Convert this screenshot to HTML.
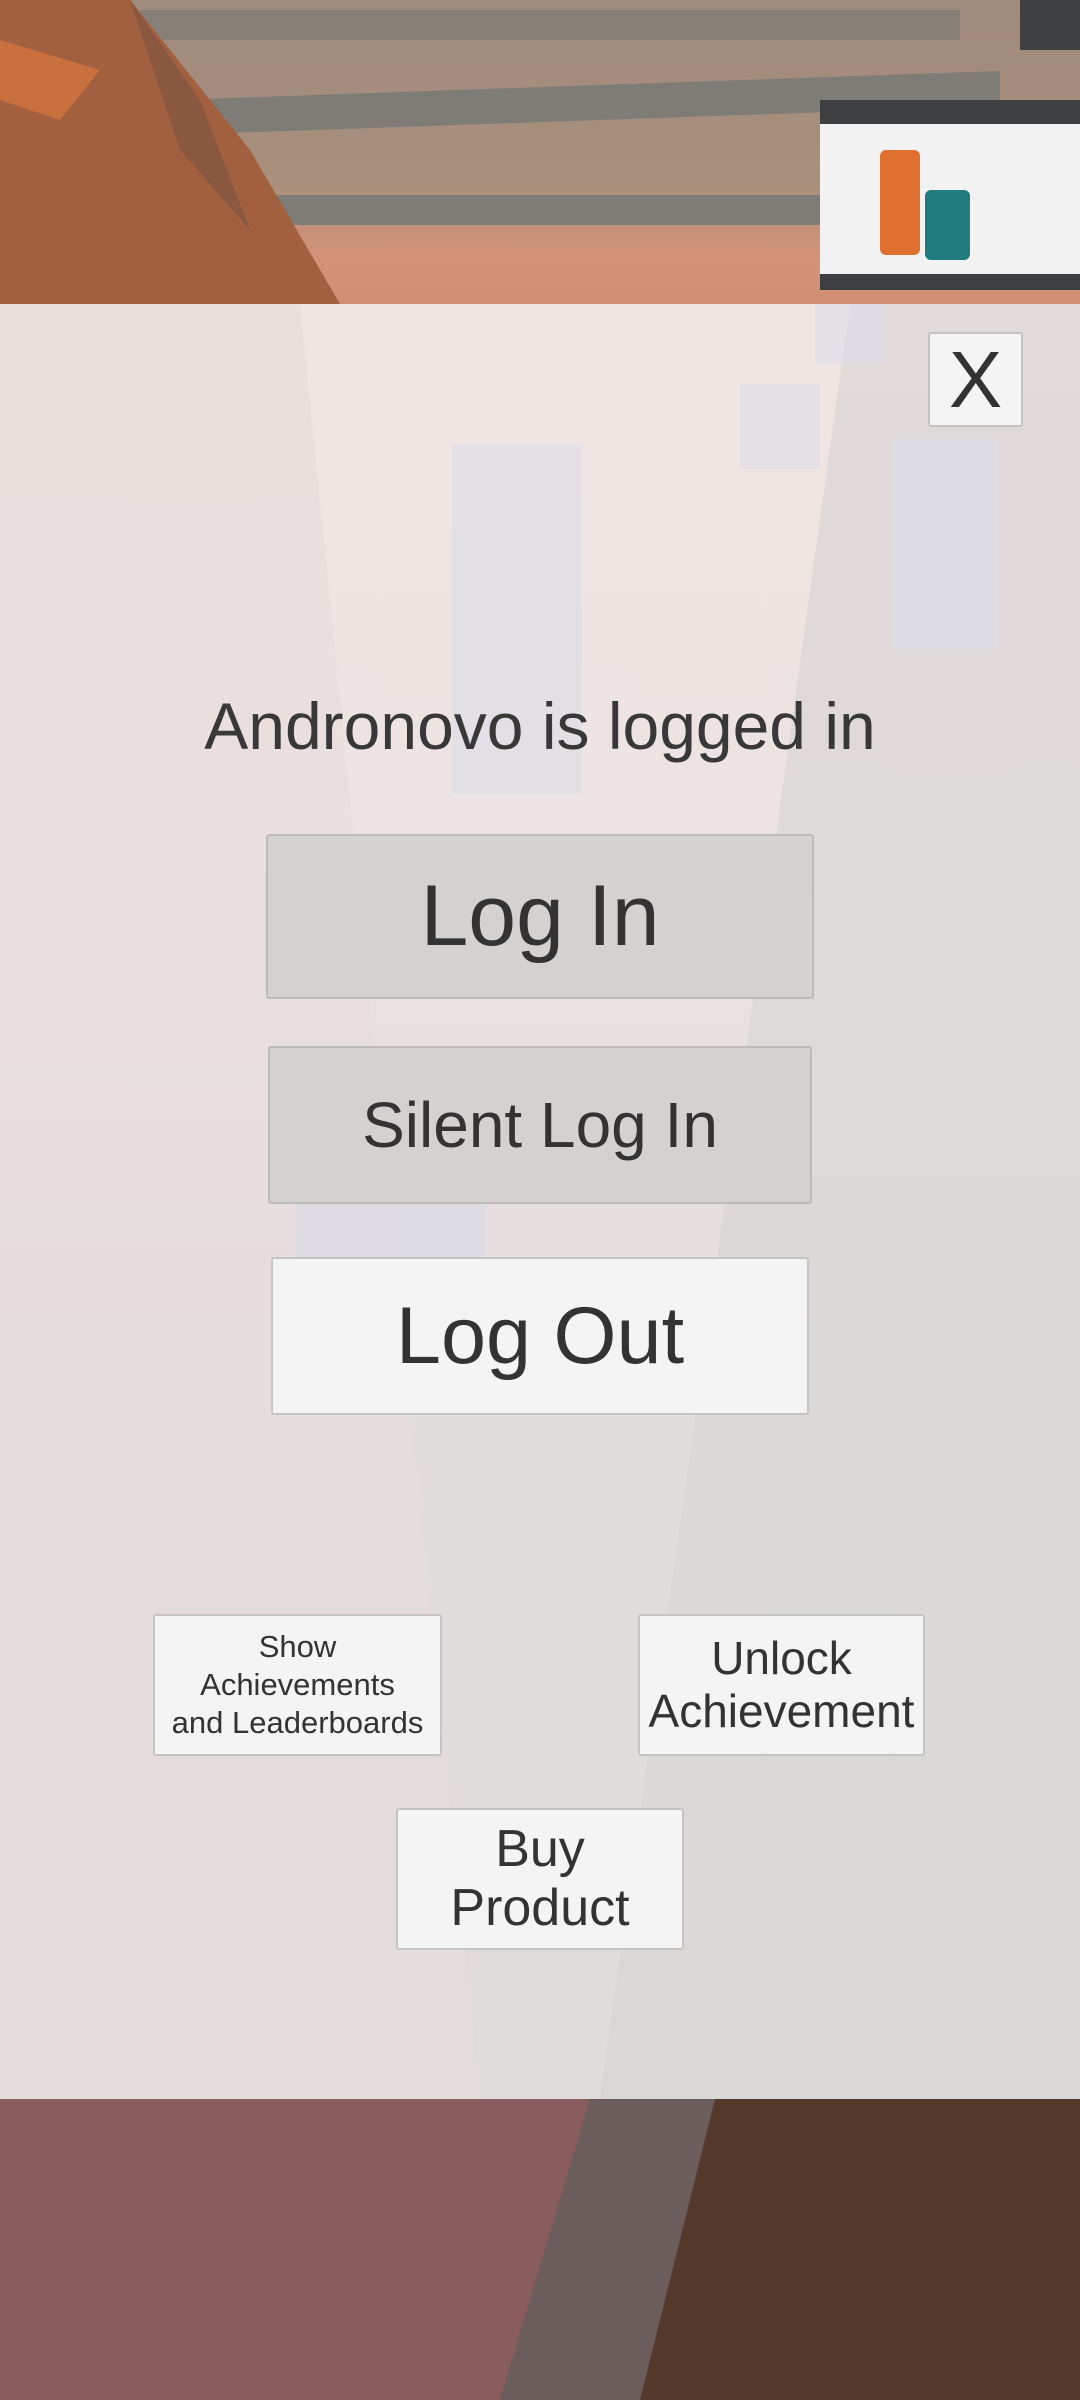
<!DOCTYPE html>
<html><head><meta charset="utf-8"><style>
html,body{margin:0;padding:0;}
body{width:1080px;height:2400px;position:relative;overflow:hidden;font-family:"Liberation Sans",sans-serif;background:#8a5c5f;}
.abs{position:absolute;}
.btn{position:absolute;box-sizing:border-box;border:2px solid #c4c4c4;border-radius:3px;display:flex;align-items:center;justify-content:center;text-align:center;color:#333;}
.light{background:#f4f4f4;}
.dark{background:#d4d1d1;border-color:#bdbaba;}
</style></head><body>
<div class="abs" style="left:0;top:0;width:1080px;height:304px;background:linear-gradient(180deg,#a08a7c 0%,#a8907c 60%,#d49277 85%,#d08e73 100%);"></div>
<div class="abs" style="left:140px;top:10px;width:820px;height:30px;background:#868078;"></div>
<div class="abs" style="left:200px;top:85px;width:800px;height:35px;background:#7f7b76;transform:skewY(-2deg);"></div>
<div class="abs" style="left:220px;top:195px;width:760px;height:30px;background:#807d79;"></div>
<svg class="abs" style="left:0;top:0" width="340" height="304"><polygon points="0,0 130,0 250,150 340,304 0,304" fill="#a2603f"/><polygon points="0,40 100,70 60,120 0,100" fill="#c9703f"/><polygon points="130,0 200,100 250,230 180,150" fill="#8a5840"/></svg>
<div class="abs" style="left:820px;top:100px;width:260px;height:190px;background:#f2f2f2;border-top:24px solid #3d3f40;border-bottom:16px solid #3d3f40;box-sizing:border-box;"></div>
<div class="abs" style="left:880px;top:150px;width:40px;height:105px;background:#e07030;border-radius:6px;"></div>
<div class="abs" style="left:925px;top:190px;width:45px;height:70px;background:#1f7b7d;border-radius:6px;"></div>
<div class="abs" style="left:1020px;top:0;width:60px;height:50px;background:#3d3f40;"></div>
<div class="abs" style="left:0;top:2099px;width:1080px;height:301px;background:#895c5e;"></div>
<svg class="abs" style="left:0;top:2099px" width="1080" height="301"><polygon points="590,0 715,0 640,301 500,301" fill="#6a5d5b"/><polygon points="715,0 1080,0 1080,301 640,301" fill="#55392a"/></svg>
<div class="abs" style="left:0;top:304px;width:1080px;height:1795px;background:linear-gradient(180deg,#f0e4e2 0%,#ece3e2 30%,#e1dcdc 60%,#dedbda 100%);"></div>
<svg class="abs" style="left:0;top:304px" width="1080" height="1795"><polygon points="0,0 300,0 480,1795 0,1795" fill="#e8dcdc" opacity="0.6"/><polygon points="850,0 1080,0 1080,1795 600,1795" fill="#d9d6d6" opacity="0.7"/>
<rect x="452" y="140" width="130" height="350" fill="#dcdde8" opacity="0.6"/><rect x="892" y="135" width="105" height="210" fill="#dcdde8" opacity="0.6"/><rect x="740" y="80" width="80" height="85" fill="#dcdde8" opacity="0.6"/><rect x="815" y="0" width="70" height="60" fill="#dcdde8" opacity="0.6"/><rect x="295" y="765" width="190" height="190" fill="#d6d8e6" opacity="0.5"/></svg>
<div class="btn light" style="left:928px;top:332px;width:95px;height:95px;font-size:80px;">X</div>
<div class="abs" style="left:0;top:688px;width:1080px;text-align:center;font-size:66px;color:#383838;">Andronovo is logged in</div>
<div class="btn dark" style="left:266px;top:834px;width:548px;height:165px;font-size:86px;">Log In</div>
<div class="btn dark" style="left:268px;top:1046px;width:544px;height:158px;font-size:64px;">Silent Log In</div>
<div class="btn light" style="left:271px;top:1257px;width:538px;height:158px;font-size:81px;">Log Out</div>
<div class="btn light" style="left:153px;top:1614px;width:289px;height:142px;font-size:31px;line-height:38px;">Show<br>Achievements<br>and Leaderboards</div>
<div class="btn light" style="left:638px;top:1614px;width:287px;height:142px;font-size:46px;line-height:53px;">Unlock<br>Achievement</div>
<div class="btn light" style="left:396px;top:1808px;width:288px;height:142px;font-size:52px;line-height:59px;">Buy<br>Product</div>
</body></html>
